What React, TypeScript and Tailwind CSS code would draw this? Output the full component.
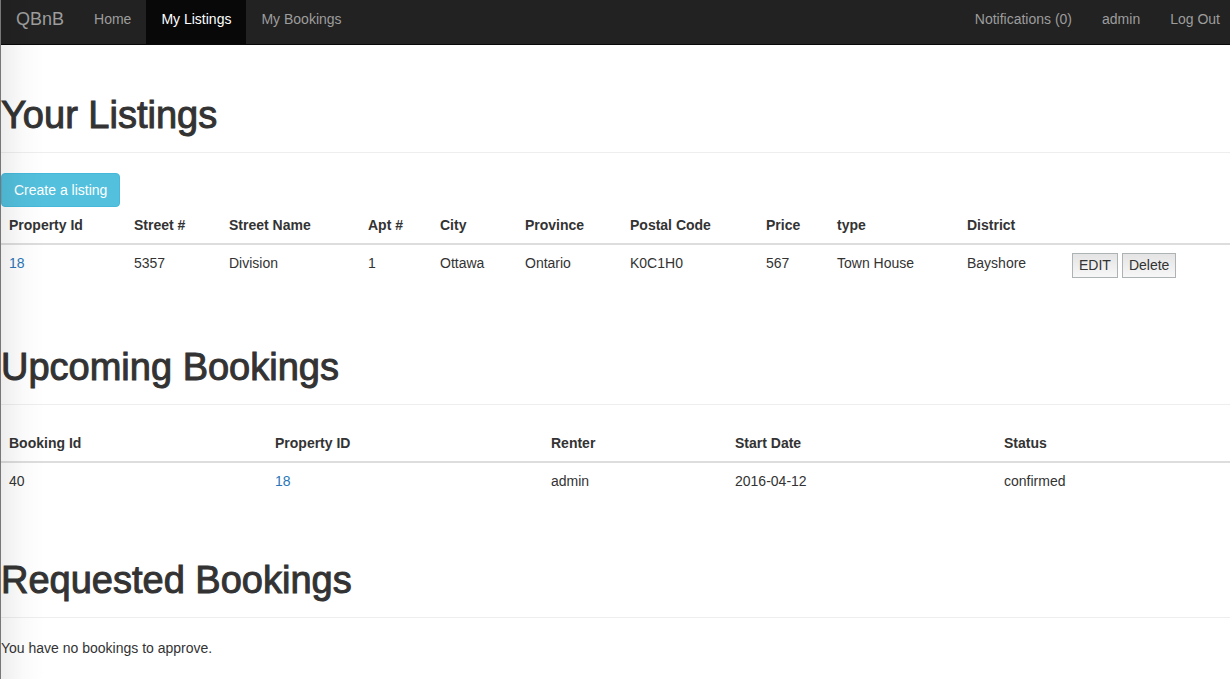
import type { ReactNode } from "react";

const listingColumns = [
  { label: "Property Id", width: "w-[125px]" },
  { label: "Street #", width: "w-[95px]" },
  { label: "Street Name", width: "w-[139px]" },
  { label: "Apt #", width: "w-[72px]" },
  { label: "City", width: "w-[85px]" },
  { label: "Province", width: "w-[105px]" },
  { label: "Postal Code", width: "w-[136px]" },
  { label: "Price", width: "w-[71px]" },
  { label: "type", width: "w-[130px]" },
  { label: "District", width: "w-[105px]" },
  { label: "", width: "w-[166px]" },
];

const bookingColumns = [
  { label: "Booking Id", width: "w-[266px]" },
  { label: "Property ID", width: "w-[276px]" },
  { label: "Renter", width: "w-[184px]" },
  { label: "Start Date", width: "w-[269px]" },
  { label: "Status", width: "w-[234px]" },
];

const listings = [
  ["18", "5357", "Division", "1", "Ottawa", "Ontario", "K0C1H0", "567", "Town House", "Bayshore"],
];

const bookings = [["40", "18", "admin", "2016-04-12", "confirmed"]];

function NavLink({ children, active = false }: { children: ReactNode; active?: boolean }) {
  return (
    <a
      href="#"
      aria-current={active ? "page" : undefined}
      className={
        active
          ? "block bg-[#080808] px-[15px] pt-[9px] pb-[15px] text-white"
          : "block px-[15px] pt-[9px] pb-[15px] text-[#9d9d9d]"
      }
    >
      {children}
    </a>
  );
}

function PageHeader({ children }: { children: ReactNode }) {
  return (
    <header className="mb-5 border-b border-[#eeeeee] pb-[17px]">
      <h1 className="text-[38px] leading-10 font-normal [-webkit-text-stroke:1px_#333333]">{children}</h1>
    </header>
  );
}

function HeadRow({ columns }: { columns: { label: string; width: string }[] }) {
  return (
    <thead>
      <tr className="border-b-2 border-[#dddddd]">
        {columns.map((c) => (
          <th key={c.label} scope="col" className={`${c.width} p-2 text-left font-bold`}>
            {c.label}
          </th>
        ))}
      </tr>
    </thead>
  );
}

function RowButton({ children }: { children: ReactNode }) {
  return (
    <button
      type="button"
      className="h-[25px] border border-[#adb2b5] bg-linear-to-b from-[#e4e4e4] to-[#f7f7f7] px-[6px] pb-[2px]"
    >
      {children}
    </button>
  );
}

const tableClass = "w-full table-fixed border-collapse";

export default function App() {
  return (
    <div className="relative min-h-screen border-l border-[#777777] bg-white font-['Liberation_Sans',Arial,sans-serif] text-[14px] leading-5 text-[#333333]">
      <nav className="flex justify-between border-b border-[#080808] bg-[#222222]">
        <div className="flex">
          <a href="#" className="block px-[15px] pt-[9px] pb-[15px] text-[18px] text-[#9d9d9d]">
            QBnB
          </a>
          <NavLink>Home</NavLink>
          <NavLink active>My Listings</NavLink>
          <NavLink>My Bookings</NavLink>
        </div>
        <div className="-mr-[5px] flex">
          <NavLink>Notifications (0)</NavLink>
          <NavLink>admin</NavLink>
          <NavLink>Log Out</NavLink>
        </div>
      </nav>

      <main className="flex flex-col gap-[61px] pt-[50px]">
        <section>
          <PageHeader>Your Listings</PageHeader>
          <button
            type="button"
            className="block rounded-[4px] border border-[#46b8da] bg-[#53c0dd] px-3 py-[6px] text-white"
          >
            Create a listing
          </button>
          <table className={tableClass}>
            <HeadRow columns={listingColumns} />
            <tbody>
              {listings.map((row) => (
                <tr key={row[0]}>
                  {row.map((value, i) => (
                    <td key={i} className="p-2 align-top">
                      {i === 0 ? (
                        <a href="#" className="text-[#2a75b8]">
                          {value}
                        </a>
                      ) : (
                        value
                      )}
                    </td>
                  ))}
                  <td className="p-2 align-top">
                    <div className="flex gap-1">
                      <RowButton>EDIT</RowButton>
                      <RowButton>Delete</RowButton>
                    </div>
                  </td>
                </tr>
              ))}
            </tbody>
          </table>
        </section>

        <section>
          <PageHeader>Upcoming Bookings</PageHeader>
          <table className={tableClass}>
            <HeadRow columns={bookingColumns} />
            <tbody>
              {bookings.map((row) => (
                <tr key={row[0]}>
                  {row.map((value, i) => (
                    <td key={i} className="p-2 align-top">
                      {i === 1 ? (
                        <a href="#" className="text-[#2a75b8]">
                          {value}
                        </a>
                      ) : (
                        value
                      )}
                    </td>
                  ))}
                </tr>
              ))}
            </tbody>
          </table>
        </section>

        <section>
          <PageHeader>Requested Bookings</PageHeader>
          <p>You have no bookings to approve.</p>
        </section>
      </main>

      <div className="pointer-events-none absolute inset-y-0 left-0 w-11 bg-linear-to-r from-black/7 via-black/2 to-transparent" />
    </div>
  );
}
